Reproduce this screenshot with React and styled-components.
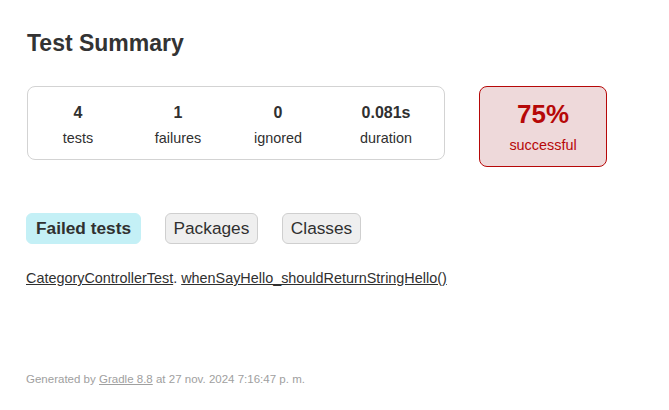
import React from "react";
import styled, { createGlobalStyle } from "styled-components";

const Global = createGlobalStyle`
  html, body { margin: 0; padding: 0; background: #fff; }
  body {
    font-family: "Liberation Sans", Arial, sans-serif;
    font-size: 14.4px;
    color: #303030;
  }
`;

const Content = styled.div`
  padding: 30px 26px 20px 26px;
`;

const Title = styled.h1`
  margin: 0 0 0 1px;
  font-size: 23px;
  font-weight: bold;
  color: #333;
  white-space: nowrap;
`;

const SummaryRow = styled.div`
  display: flex;
  align-items: flex-start;
  gap: 34px;
  margin: 29px 0 0 1px;
`;

const SummaryGroup = styled.div`
  display: flex;
  border: 1px solid #d3d3d3;
  border-radius: 8px;
  padding: 17px 0 13px 0;
`;

const Counter = styled.div`
  width: ${(p) => p.$w}px;
  text-align: center;
  display: flex;
  flex-direction: column;
  gap: 8px;
`;

const Value = styled.div`
  font-size: 16px;
  font-weight: bold;
  color: #303030;
`;

const Label = styled.div`
  font-size: 14.4px;
  color: #303030;
`;

const SuccessRate = styled.div`
  width: 126px;
  border: 1px solid #b60808;
  border-radius: 8px;
  background: #eed9da;
  color: #b60808;
  text-align: center;
  padding: 13px 0 13px 0;
  display: flex;
  flex-direction: column;
  gap: 8px;
`;

const Percent = styled.div`
  font-size: 25.9px;
  font-weight: bold;
`;

const Tabs = styled.div`
  display: flex;
  gap: 23.5px;
  margin-top: 46px;
`;

const Tab = styled.div`
  height: 31px;
  box-sizing: border-box;
  display: inline-flex;
  align-items: center;
  padding: 0 ${(p) => (p.$active ? 9 : 8)}px;
  font-size: 17.28px;
  border-radius: 6px;
  border: 1px solid ${(p) => (p.$active ? "#c4f0f6" : "#cfcfcf")};
  background: ${(p) => (p.$active ? "#c4f0f6" : "#efefef")};
  font-weight: ${(p) => (p.$active ? "bold" : "normal")};
  color: #303030;
`;

const TestLine = styled.div`
  margin-top: 26px;
  font-size: 14.4px;
  color: #303030;
`;

const Link = styled.a`
  color: #303030;
  text-decoration: underline;
`;

const Footer = styled.div`
  margin-top: 87px;
  font-size: 11.52px;
  color: #a0a0a0;
  white-space: nowrap;
`;

const FooterLink = styled.a`
  color: #a0a0a0;
  text-decoration: underline;
`;

const counters = [
  { v: "4", l: "tests", w: 100 },
  { v: "1", l: "failures", w: 100 },
  { v: "0", l: "ignored", w: 100 },
  { v: "0.081s", l: "duration", w: 116 },
];

export default function App() {
  return (
    <>
      <Global />
      <Content>
        <Title>Test Summary</Title>
        <SummaryRow>
          <SummaryGroup>
            {counters.map((c) => (
              <Counter key={c.l} $w={c.w}>
                <Value>{c.v}</Value>
                <Label>{c.l}</Label>
              </Counter>
            ))}
          </SummaryGroup>
          <SuccessRate>
            <Percent>75%</Percent>
            <div>successful</div>
          </SuccessRate>
        </SummaryRow>
        <Tabs>
          <Tab $active>Failed tests</Tab>
          <Tab>Packages</Tab>
          <Tab>Classes</Tab>
        </Tabs>
        <TestLine>
          <Link href="#">CategoryControllerTest</Link>.{" "}
          <Link href="#">whenSayHello_shouldReturnStringHello()</Link>
        </TestLine>
        <Footer>
          Generated by <FooterLink href="#">Gradle 8.8</FooterLink> at 27 nov. 2024 7:16:47 p. m.
        </Footer>
      </Content>
    </>
  );
}
